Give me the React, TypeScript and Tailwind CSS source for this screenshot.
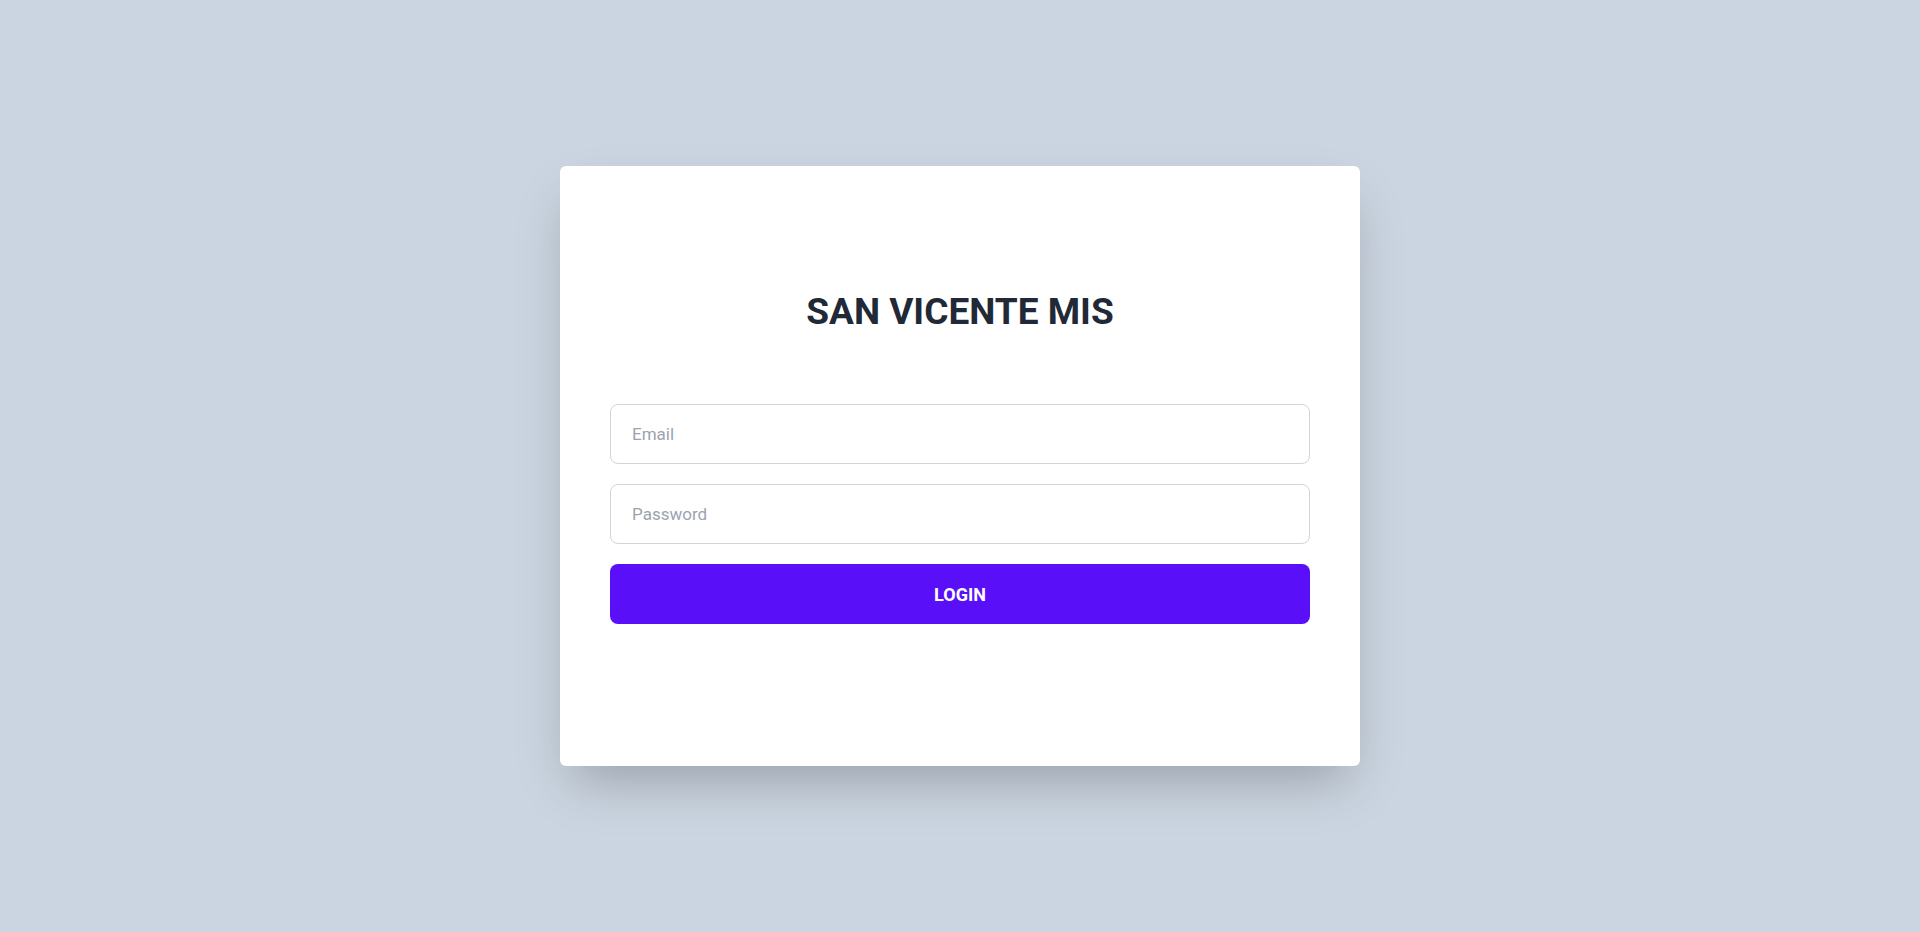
export default function App() {
  return (
    <div
      className="min-h-screen w-full bg-[#cbd5e1] flex items-center justify-center"
      style={{ fontFamily: "Roboto, 'Noto Sans', sans-serif" }}
    >
      <div className="w-[800px] h-[600px] bg-white rounded-md shadow-2xl px-[50px] pt-[126px]">
        <h1 className="text-[37px] leading-10 font-bold text-center text-[#1f2937]">SAN VICENTE MIS</h1>
        <form className="mt-[72px] flex flex-col gap-5" onSubmit={(e) => e.preventDefault()}>
          <input
            type="email"
            placeholder="Email"
            className="h-[60px] w-full rounded-lg border border-[#d1d5db] px-[21px] text-[17px] text-gray-800 placeholder-[#9ca3af] outline-none"
          />
          <input
            type="password"
            placeholder="Password"
            className="h-[60px] w-full rounded-lg border border-[#d1d5db] px-[21px] text-[17px] text-gray-800 placeholder-[#9ca3af] outline-none"
          />
          <button
            type="submit"
            className="h-[60px] w-full rounded-lg bg-[#5a0ff9] text-white text-[18px] font-bold uppercase"
          >
            Login
          </button>
        </form>
      </div>
    </div>
  );
}
